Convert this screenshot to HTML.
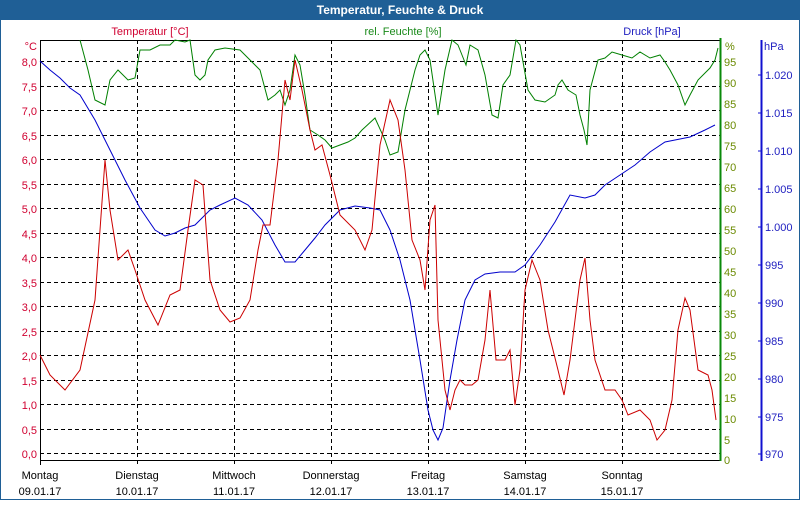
<!DOCTYPE html>
<html><head><meta charset="utf-8"><style>
body{margin:0;width:800px;height:500px;overflow:hidden;background:#fff;font-family:"Liberation Sans",sans-serif}
</style></head><body>
<svg width="800" height="500" xmlns="http://www.w3.org/2000/svg" font-family="Liberation Sans, sans-serif" font-size="11">
<rect x="0" y="0" width="800" height="500" fill="#fff"/>
<rect x="0.5" y="0.5" width="799" height="499" fill="none" stroke="#1f5f96"/>
<rect x="0" y="0" width="800" height="20" fill="#1f5f96"/>
<text x="400" y="14" fill="#fff" font-weight="bold" font-size="12" text-anchor="middle">Temperatur, Feuchte &amp; Druck</text>
<text x="150" y="35" fill="#d00030" text-anchor="middle">Temperatur [°C]</text>
<text x="403" y="35" fill="#1a8a1a" text-anchor="middle">rel. Feuchte [%]</text>
<text x="652" y="35" fill="#2020c0" text-anchor="middle">Druck [hPa]</text>
<text x="37" y="50" fill="#d00030" text-anchor="end">°C</text>
<text x="725" y="50" fill="#6a8a00">%</text>
<text x="764" y="50" fill="#2020c0">hPa</text>
<g stroke="#000" stroke-dasharray="4,3" stroke-width="1">
<line x1="40" x2="720" y1="453.5" y2="453.5"/><line x1="40" x2="720" y1="429.5" y2="429.5"/><line x1="40" x2="720" y1="404.5" y2="404.5"/><line x1="40" x2="720" y1="380.5" y2="380.5"/><line x1="40" x2="720" y1="355.5" y2="355.5"/><line x1="40" x2="720" y1="331.5" y2="331.5"/><line x1="40" x2="720" y1="306.5" y2="306.5"/><line x1="40" x2="720" y1="282.5" y2="282.5"/><line x1="40" x2="720" y1="257.5" y2="257.5"/><line x1="40" x2="720" y1="233.5" y2="233.5"/><line x1="40" x2="720" y1="208.5" y2="208.5"/><line x1="40" x2="720" y1="184.5" y2="184.5"/><line x1="40" x2="720" y1="159.5" y2="159.5"/><line x1="40" x2="720" y1="135.5" y2="135.5"/><line x1="40" x2="720" y1="110.5" y2="110.5"/><line x1="40" x2="720" y1="86.5" y2="86.5"/><line x1="40" x2="720" y1="61.5" y2="61.5"/>
<line y1="40" y2="465" x1="137.5" x2="137.5"/><line y1="40" y2="465" x1="234.5" x2="234.5"/><line y1="40" y2="465" x1="331.5" x2="331.5"/><line y1="40" y2="465" x1="428.5" x2="428.5"/><line y1="40" y2="465" x1="525.5" x2="525.5"/><line y1="40" y2="465" x1="622.5" x2="622.5"/>
</g>
<line x1="40.5" y1="40" x2="40.5" y2="465" stroke="#000"/>
<line x1="40" y1="40.5" x2="720" y2="40.5" stroke="#000"/>
<line x1="40" y1="460.5" x2="720" y2="460.5" stroke="#000"/>
<line x1="720.5" y1="38" x2="720.5" y2="461" stroke="#0a8a0a" stroke-width="2"/>
<line x1="761.5" y1="40" x2="761.5" y2="461" stroke="#1010d0" stroke-width="2"/>
<g fill="#d00030" text-anchor="end">
<text x="37" y="458">0,0</text><text x="37" y="434">0,5</text><text x="37" y="409">1,0</text><text x="37" y="385">1,5</text><text x="37" y="360">2,0</text><text x="37" y="336">2,5</text><text x="37" y="311">3,0</text><text x="37" y="287">3,5</text><text x="37" y="262">4,0</text><text x="37" y="238">4,5</text><text x="37" y="213">5,0</text><text x="37" y="189">5,5</text><text x="37" y="164">6,0</text><text x="37" y="140">6,5</text><text x="37" y="115">7,0</text><text x="37" y="91">7,5</text><text x="37" y="66">8,0</text>
</g>
<g fill="#6a8a00">
<text x="724" y="464">0</text><text x="724" y="444">5</text><text x="724" y="423">10</text><text x="724" y="402">15</text><text x="724" y="381">20</text><text x="724" y="360">25</text><text x="724" y="339">30</text><text x="724" y="318">35</text><text x="724" y="297">40</text><text x="724" y="276">45</text><text x="724" y="255">50</text><text x="724" y="234">55</text><text x="724" y="213">60</text><text x="724" y="192">65</text><text x="724" y="171">70</text><text x="724" y="150">75</text><text x="724" y="129">80</text><text x="724" y="108">85</text><text x="724" y="87">90</text><text x="724" y="66">95</text>
</g>
<g fill="#2020c0">
<text x="765" y="458">970</text><text x="765" y="421">975</text><text x="765" y="383">980</text><text x="765" y="345">985</text><text x="765" y="307">990</text><text x="765" y="269">995</text><text x="765" y="231">1.000</text><text x="765" y="193">1.005</text><text x="765" y="155">1.010</text><text x="765" y="117">1.015</text><text x="765" y="79">1.020</text>
</g>
<g stroke="#1010d0">
<line x1="758" x2="761" y1="454" y2="454"/><line x1="758" x2="761" y1="417" y2="417"/><line x1="758" x2="761" y1="379" y2="379"/><line x1="758" x2="761" y1="341" y2="341"/><line x1="758" x2="761" y1="303" y2="303"/><line x1="758" x2="761" y1="265" y2="265"/><line x1="758" x2="761" y1="227" y2="227"/><line x1="758" x2="761" y1="189" y2="189"/><line x1="758" x2="761" y1="151" y2="151"/><line x1="758" x2="761" y1="113" y2="113"/><line x1="758" x2="761" y1="75" y2="75"/>
</g>
<polyline fill="none" stroke="#0000cc" points="40,61 50,70 60,78 70,88 80,95 95,120 110,150 125,180 140,208 155,230 165,236 175,233 185,228 195,225 210,210 220,205 235,198 248,205 262,220 275,245 285,262 295,262 305,250 315,238 325,225 340,210 355,206 370,208 380,210 390,230 400,260 410,300 420,360 428,410 433,430 438,440 443,428 450,380 457,340 465,300 475,280 485,274 500,272 515,272 525,265 540,245 555,222 570,195 585,198 595,195 605,185 620,175 635,165 650,152 665,142 675,140 690,137 705,130 715,125"/>
<polyline fill="none" stroke="#008000" points="80,40 88,70 95,100 105,105 110,80 118,70 128,80 135,78 140,50 150,50 160,45 170,45 175,40 185,42 190,40 195,75 200,80 205,75 208,60 215,50 225,48 240,50 250,60 260,70 268,100 275,95 280,90 285,105 290,90 295,55 300,65 305,95 310,130 318,135 325,140 332,148 340,145 348,142 355,138 362,130 375,118 385,140 390,155 398,152 405,110 415,70 420,55 425,50 430,60 438,115 445,70 452,40 458,45 462,55 466,65 470,45 478,50 485,75 492,115 498,118 503,85 510,75 516,40 520,45 528,90 535,100 545,102 555,95 558,85 562,80 568,90 576,95 580,115 584,130 587,145 590,90 598,60 605,58 612,52 622,55 632,58 640,52 650,58 660,55 665,62 670,70 678,85 685,105 690,95 698,80 706,72 710,68 715,60 718,48"/>
<polyline fill="none" stroke="#cc0000" points="40,355 50,375 65,390 80,370 95,300 105,160 110,210 118,260 128,250 135,270 145,300 158,325 170,295 180,290 188,230 195,180 203,185 210,280 220,310 230,322 240,318 250,300 258,250 263,225 270,225 278,160 285,80 290,100 295,60 302,90 310,130 315,150 322,145 330,175 340,215 355,230 365,250 372,230 380,145 390,100 398,120 405,170 412,240 420,260 425,290 430,220 435,205 438,320 445,390 450,410 455,390 460,380 465,385 472,385 478,380 485,340 490,290 496,360 505,360 510,350 515,405 520,370 525,290 532,260 540,280 548,330 558,370 564,395 570,360 575,320 580,280 585,258 590,320 595,360 605,390 615,390 622,400 628,415 640,410 650,420 657,440 665,430 672,400 678,330 685,298 690,310 698,370 708,375 712,390 716,420"/>
<g fill="#000" text-anchor="middle">
<text x="40" y="479">Montag</text><text x="40" y="495">09.01.17</text>
<text x="137" y="479">Dienstag</text><text x="137" y="495">10.01.17</text>
<text x="234" y="479">Mittwoch</text><text x="234" y="495">11.01.17</text>
<text x="331" y="479">Donnerstag</text><text x="331" y="495">12.01.17</text>
<text x="428" y="479">Freitag</text><text x="428" y="495">13.01.17</text>
<text x="525" y="479">Samstag</text><text x="525" y="495">14.01.17</text>
<text x="622" y="479">Sonntag</text><text x="622" y="495">15.01.17</text>
</g>
</svg>
</body></html>
